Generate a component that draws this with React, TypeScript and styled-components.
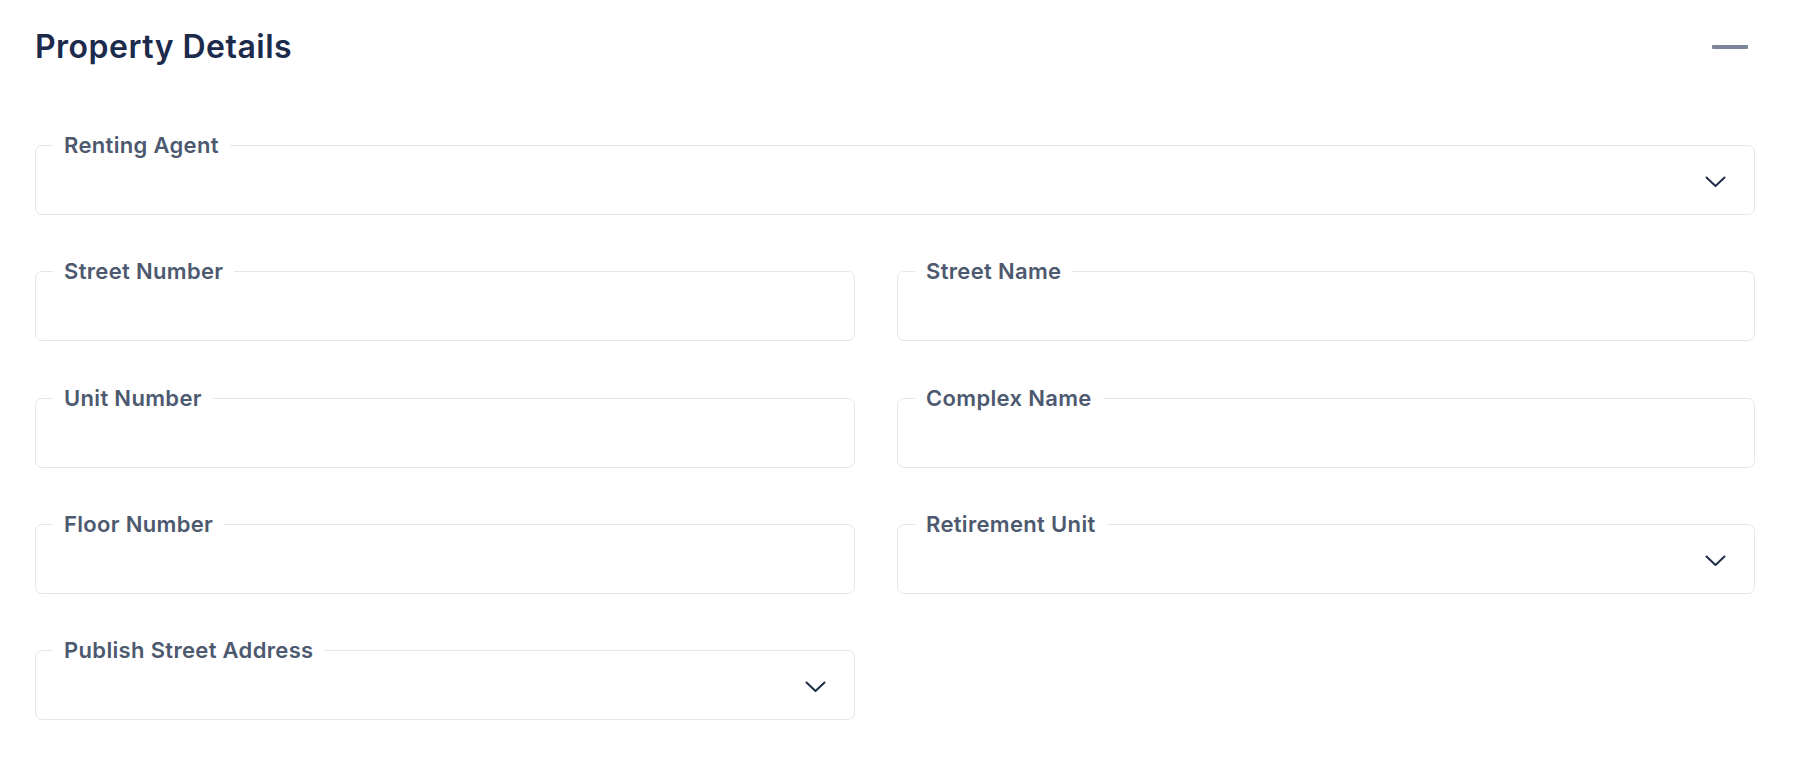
import React from "react";
import styled, { createGlobalStyle } from "styled-components";

const GlobalStyle = createGlobalStyle`
  html, body {
    margin: 0;
    padding: 0;
    background: #ffffff;
  }
  body {
    font-family: Inter, "Noto Sans", "Liberation Sans", sans-serif;
    -webkit-font-smoothing: antialiased;
  }
`;

const Section = styled.section`
  padding: 0 42px 0 35px;
  box-sizing: border-box;
  width: 100%;
`;

const Header = styled.header`
  display: flex;
  align-items: center;
  justify-content: space-between;
  height: 94px;
`;

const Title = styled.h2`
  margin: 0;
  font-size: 32px;
  font-weight: 600;
  color: #1c2a4c;
  letter-spacing: 0.015em;
  line-height: 1.2;
`;

const CollapseButton = styled.button`
  display: flex;
  align-items: center;
  justify-content: center;
  border: 0;
  background: transparent;
  padding: 0;
  margin-right: 7px;
  cursor: pointer;
  color: #7b869b;
`;

const Form = styled.div`
  display: grid;
  grid-template-columns: 820px 1fr;
  grid-auto-rows: 70px;
  column-gap: 42px;
  row-gap: 56.3px;
  padding-top: 51px;
`;

const Field = styled.div<{ $wide?: boolean }>`
  position: relative;
  grid-column: ${(p) => (p.$wide ? "1 / -1" : "auto")};
  display: flex;
  align-items: center;
  justify-content: flex-end;
  box-sizing: border-box;
  border: 1px solid #e1e7ef;
  border-radius: 7px;
  padding: 4px 28px 0 30px;
  background: #fff;
`;

const Label = styled.label`
  position: absolute;
  left: 17px;
  top: -1px;
  transform: translateY(-50%);
  padding: 0 11px;
  background: #fff;
  font-size: 22px;
  font-weight: 600;
  letter-spacing: 0.015em;
  line-height: 1.2;
  color: #4d596f;
  white-space: nowrap;
`;

const Chevron = () => (
  <svg width="21" height="12" viewBox="0 0 21 12" fill="none">
    <path
      d="M1.5 1.5 L10.5 10 L19.5 1.5"
      stroke="#1f2c48"
      strokeWidth="2"
      strokeLinecap="round"
      strokeLinejoin="round"
    />
  </svg>
);

const Minus = () => (
  <svg width="36" height="6" viewBox="0 0 36 6">
    <rect x="0" y="1" width="36" height="4" rx="1" fill="currentColor" />
  </svg>
);

type FieldDef = { label: string; select?: boolean; wide?: boolean };

const fields: FieldDef[] = [
  { label: "Renting Agent", select: true, wide: true },
  { label: "Street Number" },
  { label: "Street Name" },
  { label: "Unit Number" },
  { label: "Complex Name" },
  { label: "Floor Number" },
  { label: "Retirement Unit", select: true },
  { label: "Publish Street Address", select: true },
];

export default function App() {
  return (
    <>
      <GlobalStyle />
      <Section>
        <Header>
          <Title>Property Details</Title>
          <CollapseButton aria-label="Collapse">
            <Minus />
          </CollapseButton>
        </Header>
        <Form>
          {fields.map((f) => (
            <Field key={f.label} $wide={f.wide}>
              <Label>{f.label}</Label>
              {f.select && <Chevron />}
            </Field>
          ))}
        </Form>
      </Section>
    </>
  );
}
